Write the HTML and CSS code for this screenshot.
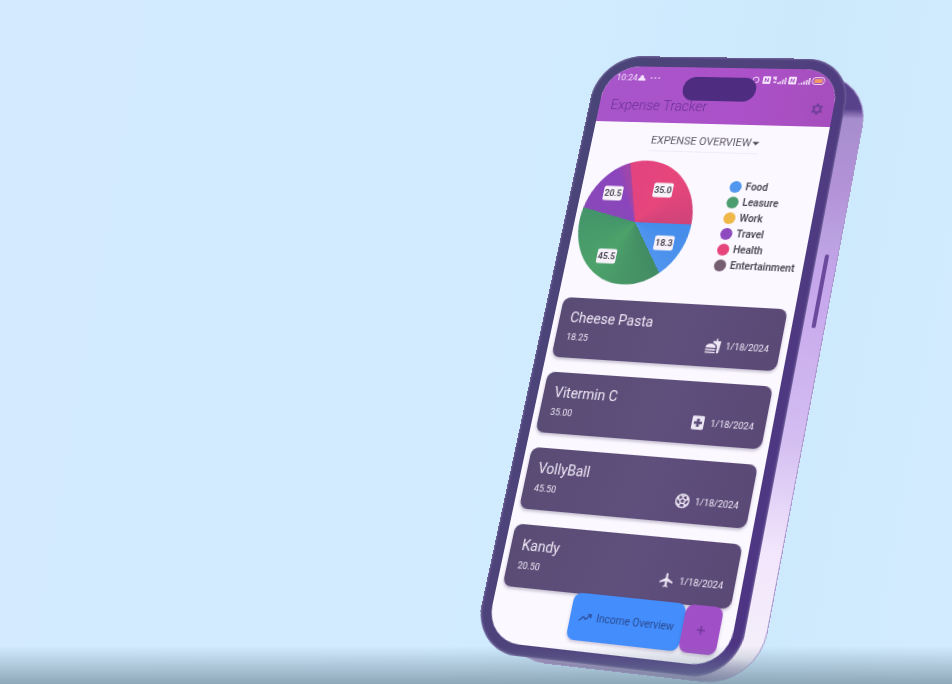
FILE: index.html
```html
<!DOCTYPE html>
<html lang="en">
<head>
<meta charset="utf-8">
<meta name="viewport" content="width=device-width, initial-scale=1">
<title>Expense Tracker</title>
<link rel="stylesheet" href="styles.css">
</head>
<body>
<main class="stage">
  <div class="phone">
    <div class="side-button"></div>
    <div class="bezel">
      <div class="screen">
        <header class="app-header">
          <div class="status">
            <span class="status-left">10:24
              <svg width="8" height="6" viewBox="0 0 8 6"><path d="M0 6C0 4 1 3 2 3 2 1 3 0 4 0s2 1 2 3c1 0 2 1 2 3z" fill="currentColor"/></svg>
              <svg class="dots" width="10" height="2" viewBox="0 0 10 2" fill="currentColor"><circle cx="1" cy="1" r="1"/><circle cx="5" cy="1" r="1"/><circle cx="9" cy="1" r="1"/></svg>
            </span>
            <svg class="status-icons" width="76" height="10" viewBox="0 0 76 10" fill="none" stroke="currentColor">
              <circle cx="6" cy="5" r="3"/>
              <rect x="13" y="1" width="8" height="8" rx="1" fill="currentColor" stroke="none"/>
              <path d="M15.500 7V3l3 4V3" stroke="#a552c4"/>
              <path d="M24 1v2h2M26 1v4M24 7h3M29 9V7M31 9V6M33.500 9V4M36 9V2" stroke-width="1.400"/>
              <rect x="39" y="1" width="8" height="8" rx="1" fill="currentColor" stroke="none"/>
              <path d="M41.500 7V3l3 4V3" stroke="#a552c4"/>
              <path d="M50 9V8M52.500 9V7M55 9V5.500M57.500 9V4M60 9V2" stroke-width="1.500"/>
              <rect x="63" y="1.500" width="12" height="7" rx="3" stroke="#f5d5e8"/>
              <rect x="65" y="3" width="8" height="4" rx="1" fill="#f09a68" stroke="none"/>
            </svg>
          </div>
          <div class="title-bar">
            <h1>Expense Tracker</h1>
            <button class="settings" aria-label="Settings">
              <svg width="14" height="14" viewBox="0 0 24 24" fill="currentColor"><path fill-rule="evenodd" d="M10 2h4l.6 3 1.900 1 2.800-1 2 3.500-2.200 2v3l2.200 2-2 3.500-2.800-1-1.900 1-.6 3h-4l-.6-3-1.900-1-2.800 1-2-3.500 2.200-2v-3l-2.200-2 2-3.500 2.800 1 1.900-1zM12 8a4 4 0 1 0 0 8 4 4 0 0 0 0-8z"/></svg>
            </button>
          </div>
          <div class="island"></div>
        </header>

        <section class="overview">
          <div class="picker">
            <select aria-label="Overview type"><option>EXPENSE OVERVIEW</option><option>INCOME OVERVIEW</option></select>
            <svg width="7" height="4" viewBox="0 0 8 4"><path d="M0 0h8L4 4z" fill="#49434f"/></svg>
          </div>
          <div class="chart-row">
            <div class="pie">
              <span class="tag tag-health">35.0</span>
              <span class="tag tag-travel">20.5</span>
              <span class="tag tag-food">18.3</span>
              <span class="tag tag-leasure">45.5</span>
            </div>
            <ul class="legend">
              <li class="food">Food</li>
              <li class="leasure">Leasure</li>
              <li class="work">Work</li>
              <li class="travel">Travel</li>
              <li class="health">Health</li>
              <li class="entertainment">Entertainment</li>
            </ul>
          </div>
        </section>

        <ul class="expenses">
          <li class="card">
            <h2>Cheese Pasta</h2>
            <div class="details"><span>18.25</span>
              <span class="when">
                <svg width="16" height="16" viewBox="0 0 24 24" fill="currentColor"><path d="M18.060 22.990h1.660c.84 0 1.530-.64 1.630-1.460L23 5.050h-5V1h-1.970v4.050h-4.970l.3 2.340c1.710.47 3.310 1.320 4.270 2.260 1.440 1.420 2.430 2.890 2.430 5.290v8.050zM1 21.990V21h15.030v.99c0 .55-.45 1-1.010 1H2.010c-.56 0-1.010-.45-1.010-1zm15.030-7c0-8-15.030-8-15.030 0h15.030zM1.020 17h15v2h-15z"/></svg>
                <time>1/18/2024</time>
              </span>
            </div>
          </li>
          <li class="card">
            <h2>Vitermin C</h2>
            <div class="details"><span>35.00</span>
              <span class="when">
                <svg width="16" height="16" viewBox="0 0 24 24" fill="currentColor"><path fill-rule="evenodd" d="M5 2h14a2 2 0 0 1 2 2v16a2 2 0 0 1-2 2H5a2 2 0 0 1-2-2V4a2 2 0 0 1 2-2zm5 4v4H6v4h4v4h4v-4h4v-4h-4V6z"/></svg>
                <time>1/18/2024</time>
              </span>
            </div>
          </li>
          <li class="card">
            <h2>VollyBall</h2>
            <div class="details"><span>45.50</span>
              <span class="when">
                <svg width="16" height="16" viewBox="0 0 24 24" fill="none" stroke="currentColor" stroke-width="2"><circle cx="12" cy="12" r="9.500"/><path d="m12 8 4 3-1.500 4.500h-5L8 11zM12 8V5.500M16 11l3-1.500M14.500 15.500l2 3M9.500 15.500l-2 3M8 11 5 9.500M8.500 3.500 12 5.500l3.500-2M21 9.500l-2 0-1-4M5 9.500H3M5 9.500l1-4M3 15l4.500 3.500M21 15l-4.500 3.500M7.500 18.500l1 2.500M16.500 18.500l-1 2.500"/></svg>
                <time>1/18/2024</time>
              </span>
            </div>
          </li>
          <li class="card">
            <h2>Kandy</h2>
            <div class="details"><span>20.50</span>
              <span class="when">
                <svg width="16" height="16" viewBox="0 0 24 24" fill="currentColor"><path d="M21 16v-2l-8-5V3.500a1.500 1.500 0 0 0-3 0V9l-8 5v2l8-2.500V19l-2 1.500V22l3.500-1 3.500 1v-1.500L13 19v-5.500z"/></svg>
                <time>1/18/2024</time>
              </span>
            </div>
          </li>
        </ul>

        <div class="actions">
          <button class="income">
            <svg width="14" height="14" viewBox="0 0 24 24" fill="none" stroke="currentColor" stroke-width="2"><path d="m2 17.500 7-7 4 4L21 7M16 6.500h5.500V12"/></svg>
            Income Overview
          </button>
          <button class="add" aria-label="Add expense">
            <svg width="12" height="12" viewBox="0 0 24 24" fill="none" stroke="currentColor" stroke-width="2"><path d="M12 4v16M4 12h16"/></svg>
          </button>
        </div>
      </div>
    </div>
  </div>
  <div class="fade"></div>
</main>
</body>
</html>
```
FILE: styles.css
```css
* { box-sizing: border-box; }

body {
  margin: 0;
  font-family: Roboto, "Liberation Sans", sans-serif;
  background: #d2ebff;
}

h1, h2, ul { margin: 0; padding: 0; }
ul { list-style: none; }
svg { display: block; flex: none; }

button {
  border: 0;
  padding: 0;
  font: inherit;
  color: inherit;
  background: none;
}

.stage {
  position: relative;
  height: 100vh;
  overflow: hidden;
  background: linear-gradient(100deg, #d4ebff 0%, #d2ebff 50%, #cce9fc 75%, #d3ebff 100%);
}

/* The device is drawn flat, then tilted in perspective as a whole. */
.phone {
  position: relative;
  width: 262px;
  transform-origin: 0 0;
  transform: matrix3d(0.8392, 0.0054, 0, -0.0001538, -0.2533, 0.92, 0, -0.0000908, 0, 0, 1, 0, 599.7, 55.6, 0, 1);
}

.phone::before {
  content: "";
  position: absolute;
  inset: 16px -21px -4px 24px;
  border-radius: 52px;
  border: 1px solid #ad98cf;
  background: linear-gradient(180deg, #58428c 0, #58428c 34px, #a68dcd 44px, #b493d9 120px, #b9a0df 160px, #c5a5eb 200px, #d3bdf1 360px, #f2e6fc 470px, #f4effa 570px, #9d87b8 100%);
}

.side-button {
  position: absolute;
  left: 270px;
  top: 198px;
  width: 4px;
  height: 73px;
  border-radius: 3px;
  background: #6a4a9c;
}

.bezel {
  position: relative;
  padding: 11px;
  border-radius: 46px;
  background: linear-gradient(100deg, #494577 0%, #50427d 50%, #4d3484 100%);
  box-shadow: inset 0 0 2px 1px #77699f;
}

.screen {
  position: relative;
  overflow: hidden;
  padding-bottom: 54px;
  border-radius: 35px;
  background: #fbf8ff;
}

.app-header {
  position: relative;
  height: 59px;
  padding: 6px 13px 0 12px;
  background: linear-gradient(90deg, #a855ca, #ac51c9 60%, #a64ebd);
}

.status {
  display: flex;
  justify-content: space-between;
  align-items: center;
  height: 12px;
  font-size: 9px;
  color: #f4e3fb;
}

.status-left { display: flex; align-items: center; gap: 1px; }
.dots { margin-left: 4px; opacity: 0.7; }

.title-bar {
  display: flex;
  justify-content: space-between;
  align-items: center;
  height: 36px;
  padding-top: 10px;
  color: #693092;
}

.title-bar h1 { font-size: 14px; font-weight: 300; }
.settings { margin-right: -4px; color: #74409b; }

.island {
  position: absolute;
  left: 84px;
  top: 10px;
  width: 75px;
  height: 25px;
  border-radius: 12px;
  background: #4e2c80;
}

.overview { height: 184px; padding-top: 8px; }

.picker {
  display: flex;
  align-items: center;
  width: 111px;
  height: 22px;
  margin-left: 62px;
  border-bottom: 1px solid #f0ebf5;
}

.picker select {
  appearance: none;
  flex: 1;
  border: 0;
  padding: 0;
  font: 11px Roboto, sans-serif;
  color: #5d5766;
  background: none;
}

.chart-row { display: flex; gap: 31px; padding: 10px 0 0 5px; }

.pie {
  position: relative;
  width: 116px;
  height: 128px;
  border-radius: 50%;
  background: conic-gradient(from 90deg,
    #438ce9 0deg, #5095ef 55deg,
    #428b63 55deg, #4da26a 125deg, #43946a 193deg,
    #8848b8 193deg, #8b45bd 240deg, #a447a5 254deg,
    #e3437f 254deg, #e7467b 310deg, #cf4379 360deg);
}

.tag {
  position: absolute;
  transform: translate(-50%, -50%);
  padding: 2px 1px;
  border-radius: 2px;
  font-size: 9px;
  line-height: 11px;
  font-weight: 600;
  color: #43404a;
  background: #f8f3fb;
}

.tag-health { left: 80px; top: 30px; }
.tag-travel { left: 29px; top: 35px; }
.tag-food { left: 92px; top: 84px; }
.tag-leasure { left: 36px; top: 100px; }

.legend { padding-top: 16px; font-size: 10px; line-height: 16px; font-weight: 600; color: #4c4753; }
.legend li { display: flex; align-items: center; gap: 4px; }
.legend li::before { content: ""; width: 12px; height: 12px; border-radius: 50%; background: var(--dot); }
.food { --dot: #5196ef; }
.leasure { --dot: #4b9c6e; }
.work { --dot: #efb849; }
.travel { --dot: #8e4abe; }
.health { --dot: #e5457a; }
.entertainment { --dot: #755e70; }

.expenses { display: grid; gap: 15px; padding: 0 7px 0 6px; }

.card {
  height: 61px;
  padding: 10px 11px 0;
  border-radius: 8px;
  color: #eee8f6;
  background: linear-gradient(100deg, #594c74, #5f4f7c 55%, #5a4875);
  box-shadow: 0 2px 3px #5d507455;
}

.card h2 { font-size: 14px; line-height: 20px; font-weight: 400; }

.details {
  display: flex;
  justify-content: space-between;
  align-items: center;
  height: 20px;
  font-size: 9px;
}

.when { display: flex; align-items: center; gap: 4px; }

.actions {
  position: absolute;
  right: 13px;
  bottom: 10px;
  display: flex;
}

.income, .add {
  display: flex;
  align-items: center;
  justify-content: center;
  height: 45px;
  border-radius: 8px;
  box-shadow: 0 2px 3px #54407040;
}

.income {
  gap: 4px;
  width: 111px;
  font-size: 10px;
  color: #2b4a91;
  background: #438efc;
}

.add { width: 36px; color: #61308b; background: #a14fc7; }

.fade {
  position: absolute;
  inset: auto 0 0;
  height: 38px;
  background: linear-gradient(180deg, #6f899900, #6f8999b0);
}
```
